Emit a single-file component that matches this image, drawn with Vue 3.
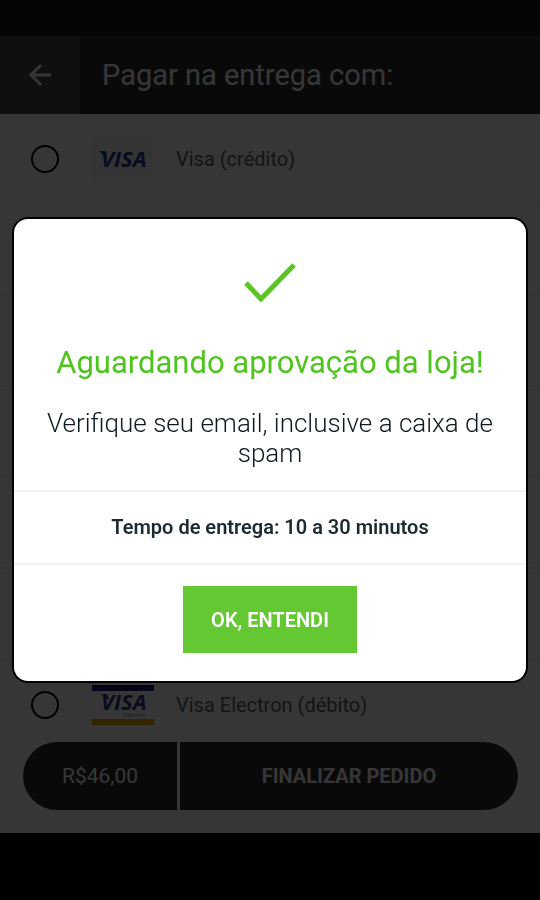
<template>
  <div class="page">
    <div class="status-bar"></div>

    <header class="header">
      <button class="back" type="button" aria-label="Voltar">
        <svg width="24" height="24" viewBox="0 0 24 24">
          <path d="M23 12H3M13 2L3 12l10 10" />
        </svg>
      </button>
      <h1 class="title">Pagar na entrega com:</h1>
    </header>

    <main class="methods">
      <div class="method" v-for="(item, index) in methods" :key="index">
        <label class="method-label" v-if="item">
          <input type="radio" name="method" :value="item.id" v-model="selected" />
          <svg class="logo" width="62" height="40" viewBox="0 0 62 40">
            <rect class="logo-card" :class="{ electron: item.electron }" width="62" height="40" />
            <template v-if="item.electron">
              <rect class="logo-top" width="62" height="6" />
              <rect class="logo-bottom" y="34" width="62" height="6" />
            </template>
            <path class="logo-serif" :d="item.electron ? 'M9 9h6l2 5h-3z' : 'M7 12h6l2 5h-3z'" />
            <text class="logo-text" x="9" :y="item.electron ? 25 : 28">VISA</text>
            <text class="logo-sub" x="32" y="32" v-if="item.electron">Electron</text>
          </svg>
          <span>{{ item.name }}</span>
        </label>
      </div>
    </main>

    <footer class="footer">
      <div class="total">R$46,00</div>
      <button class="finish" type="button">FINALIZAR PEDIDO</button>
    </footer>

    <div class="nav-bar"></div>

    <div class="overlay" v-if="open">
      <div class="modal" role="dialog" aria-labelledby="modal-title">
        <div class="modal-body">
          <svg class="check" width="52" height="40" viewBox="0 0 52 40">
            <path d="M2 20l15 16L50 2" />
          </svg>
          <h2 id="modal-title">Aguardando aprovação da loja!</h2>
          <p>Verifique seu email, inclusive a caixa de spam</p>
        </div>
        <div class="delivery">Tempo de entrega: 10 a 30 minutos</div>
        <div class="modal-actions">
          <button class="confirm" type="button" @click="open = false">OK, ENTENDI</button>
        </div>
      </div>
    </div>
  </div>
</template>

<script setup>
import { ref } from 'vue'

const open = ref(true)
const selected = ref('')

// null keeps an empty row in the list
const methods = [
  { id: 'visa-credito', name: 'Visa (crédito)', electron: false },
  null,
  null,
  null,
  null,
  null,
  { id: 'visa-electron', name: 'Visa Electron (débito)', electron: true },
]
</script>

<style>
body {
  margin: 0;
  background: #000;
}
</style>

<style scoped>
* {
  box-sizing: border-box;
}

.page {
  display: flex;
  flex-direction: column;
  height: 100vh;
  background: #fff;
  font-family: Roboto, 'Liberation Sans', sans-serif;
}

button {
  border: 0;
  padding: 0;
  font-family: inherit;
  cursor: pointer;
}

.status-bar {
  flex-shrink: 0;
  height: 36px;
  background: #181818;
}

.header {
  display: flex;
  flex-shrink: 0;
  height: 78px;
  background: #2e2e2e;
}

.back {
  display: flex;
  align-items: center;
  justify-content: center;
  width: 80px;
  background: #464646;
}

.back path {
  fill: none;
  stroke: #fff;
  stroke-width: 3;
}

.title {
  margin: 0;
  padding-left: 22px;
  color: #fff;
  font-size: 29px;
  font-weight: 400;
  line-height: 78px;
}

.methods {
  flex: 1;
  min-height: 0;
  overflow: hidden;
}

.method {
  height: 91px;
  border-bottom: 2px solid #f0f0f0;
}

.method-label {
  display: flex;
  align-items: center;
  height: 100%;
  padding-left: 31px;
  color: #5a6468;
  font-size: 20px;
  cursor: pointer;
}

.method-label input {
  appearance: none;
  width: 28px;
  height: 28px;
  margin: 0;
  border: 2px solid #000;
  border-radius: 50%;
}

.method-label input:checked {
  background: radial-gradient(#000 45%, transparent 50%);
}

.logo {
  margin: 0 22px 0 33px;
}

.logo-card {
  fill: #f3f3f5;
}

.logo-card.electron {
  fill: #fff;
}

.logo-top {
  fill: #140f6e;
}

.logo-bottom {
  fill: #f2a800;
}

.logo-serif {
  fill: #2a3590;
}

.logo-text {
  fill: #2a3590;
  font-family: 'Open Sans', sans-serif;
  font-size: 22px;
  font-style: italic;
  font-weight: 700;
}

.logo-sub {
  fill: #8a8fb5;
  font-size: 6px;
  font-style: italic;
}

.footer {
  display: flex;
  flex-shrink: 0;
  gap: 3px;
  padding: 0 22px 23px 23px;
}

.total,
.finish {
  height: 68px;
  background: #2e2e2e;
  color: #fff;
  font-size: 20px;
  line-height: 68px;
  text-align: center;
}

.total {
  width: 154px;
  border-radius: 34px 0 0 34px;
  font-size: 21px;
}

.finish {
  flex: 1;
  border-radius: 0 34px 34px 0;
  font-weight: 700;
}

.nav-bar {
  flex-shrink: 0;
  height: 67px;
  background: #000;
}

.overlay {
  position: fixed;
  inset: 0;
  display: flex;
  align-items: center;
  justify-content: center;
  padding: 14px;
  background: rgba(0, 0, 0, 0.79);
}

.modal {
  width: 100%;
  border-radius: 14px;
  background: #fff;
  box-shadow: 0 0 0 2px #000;
  color: #1c2b33;
  text-align: center;
}

.modal-body {
  padding: 44px 24px 22px;
}

.check {
  display: block;
  margin: 0 auto;
}

.check path {
  fill: none;
  stroke: #5ac522;
  stroke-width: 5;
}

.modal-body h2 {
  margin: 40px 0 25px;
  color: #4fc41f;
  font-size: 31px;
  font-weight: 400;
  line-height: 40px;
}

.modal-body p {
  margin: 0;
  color: #0c1a22;
  font-size: 26px;
  font-weight: 300;
  line-height: 30px;
}

.delivery {
  border: solid #f2f2f2;
  border-width: 2px 0;
  font-size: 20px;
  font-weight: 600;
  line-height: 71px;
}

.modal-actions {
  padding: 21px 24px 28px;
}

.confirm {
  height: 67px;
  padding: 0 28px;
  background: #64c832;
  color: #fff;
  font-size: 20px;
  font-weight: 600;
}
</style>
